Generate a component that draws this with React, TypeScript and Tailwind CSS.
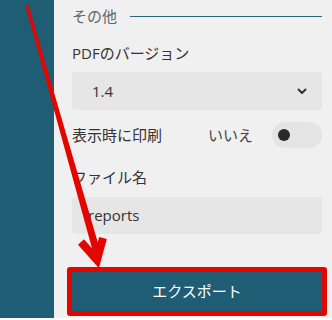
import React from 'react';

const font = { fontFamily: '"Open Sans", "Noto Sans CJK JP", sans-serif' };

export default function App() {
  return (
    <div className="relative w-[332px] h-[320px] overflow-hidden bg-white" style={font}>
      <div className="flex h-[318px]">
        {/* left sidebar */}
        <div className="w-[54px] shrink-0 bg-[#1f5d74]" />

        {/* settings panel */}
        <div className="flex-1 bg-[#f0f0f0] pl-[18px] pr-[10px] pt-[6px] text-[15px] text-[#333]">
          <div className="flex h-[20px] items-center">
            <span className="leading-[20px] text-[#5b6870]">その他</span>
            <div className="ml-[13px] h-px flex-1 bg-[#2b6378]" />
          </div>

          <div className="mt-[17px] h-[20px] leading-[20px]">PDFのバージョン</div>

          <div className="mt-[9px] flex h-[38px] items-center justify-between rounded-[3px] bg-[#e6e6e6] pl-[20px] pr-[15px]">
            <span>1.4</span>
            <svg width="10" height="7" viewBox="0 0 10 7" fill="none">
              <path d="M1.5 1.5 L5 5 L8.5 1.5" stroke="#333" strokeWidth="2" strokeLinecap="round" strokeLinejoin="round" />
            </svg>
          </div>

          <div className="mt-[12px] flex h-[26px] items-center">
            <span className="flex-1 leading-[20px]">表示時に印刷</span>
            <span className="leading-[20px] text-[#444]">いいえ</span>
            <div className="ml-[19px] flex h-[26px] w-[50px] items-center rounded-full bg-[#e4e4e4] pl-[6px]">
              <div className="h-[12px] w-[12px] rounded-full bg-[#2a2a2a]" />
            </div>
          </div>

          <div className="mt-[19px] h-[20px] leading-[20px]">ファイル名</div>

          <div className="mt-[10px] flex h-[37px] items-center rounded-[3px] bg-[#e6e6e6] pl-[16px]">
            reports
          </div>

          <div className="-mx-[5px] mt-[33px] rounded-[3px] border-[5px] border-[#e10600]">
            <button className="flex h-[39px] w-full items-center justify-center bg-[#1f5d74] text-[15px] text-white">
              エクスポート
            </button>
          </div>
        </div>
      </div>

      {/* annotation arrow */}
      <svg className="pointer-events-none absolute left-0 top-0" width="332" height="320" viewBox="0 0 332 320">
        <polygon points="25.5,6 28.5,5 100,250 93,252" fill="#e10600" />
        <polyline points="81,242 97,260 103,238" fill="none" stroke="#e10600" strokeWidth="8" strokeLinejoin="miter" />
      </svg>
    </div>
  );
}
